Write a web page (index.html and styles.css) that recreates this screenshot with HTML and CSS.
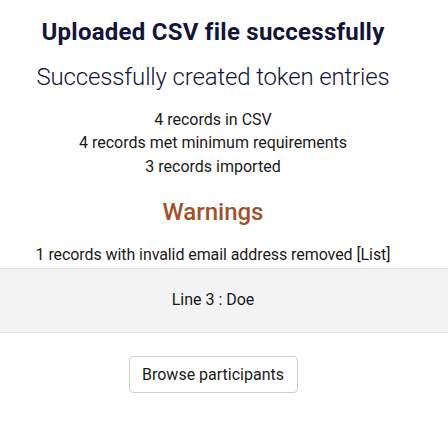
FILE: index.html
```html
<!DOCTYPE html>
<html lang="en">
<head>
<meta charset="utf-8">
<title>Uploaded CSV file successfully</title>
<link rel="stylesheet" href="styles.css">
</head>
<body>
<main class="result">
  <h2 class="title">Uploaded CSV file successfully</h2>
  <p class="subtitle">Successfully created token entries</p>
  <ul class="stats">
    <li>4 records in CSV</li>
    <li>4 records met minimum requirements</li>
    <li>3 records imported</li>
  </ul>
  <h2 class="warn-title">Warnings</h2>
  <p class="warn-line">1 records with invalid email address removed [List]</p>
  <div class="warn-list">Line 3 : Doe</div>
  <div class="actions">
    <button class="btn" type="button">Browse participants</button>
  </div>
</main>
</body>
</html>
```
FILE: styles.css
```css
html, body {
  margin: 0;
  padding: 0;
  background: #ffffff;
}
body {
  font-family: Roboto, "Liberation Sans", Arial, sans-serif;
  color: #1a1a1a;
}
.result {
  display: flex;
  flex-direction: column;
  align-items: stretch;
  text-align: center;
  padding: 17.5px 22px 0 0;
}
.title {
  margin: 0;
  font-size: 24px;
  line-height: 1.2;
  font-weight: 700;
  letter-spacing: 0.25px;
  color: #14143a;
}
.subtitle {
  margin: 17px 0 0;
  font-size: 24px;
  line-height: 1.2;
  font-weight: 300;
  letter-spacing: -0.15px;
  color: #14143a;
}
.stats {
  list-style: none;
  margin: 16.1px 0 0;
  padding: 0;
  font-size: 16px;
  line-height: 23.3px;
}
.warn-title {
  margin: 19.8px 0 0;
  font-size: 24px;
  line-height: 1.2;
  font-weight: 500;
  color: #a0522d;
}
.warn-line {
  margin: 17.6px 0 0;
  font-size: 16px;
  line-height: 1.42857;
  letter-spacing: -0.08px;
}
.warn-list {
  margin: 1px -22px 0 0;
  padding-right: 22px;
  height: 63px;
  display: flex;
  align-items: center;
  justify-content: center;
  background: #f3f3f3;
  border-top: 1px solid #e2e2e2;
  border-bottom: 1px solid #e2e2e2;
  font-size: 16px;
  line-height: 1.42857;
}
.actions {
  display: flex;
  justify-content: center;
  margin-top: 23.3px;
}
.btn {
  width: 169px;
  height: 37px;
  font-family: inherit;
  font-size: 16px;
  color: #1a1a1a;
  background: #ffffff;
  border: 1px solid #cfcfcf;
  border-radius: 4px;
  padding: 0;
}
```
